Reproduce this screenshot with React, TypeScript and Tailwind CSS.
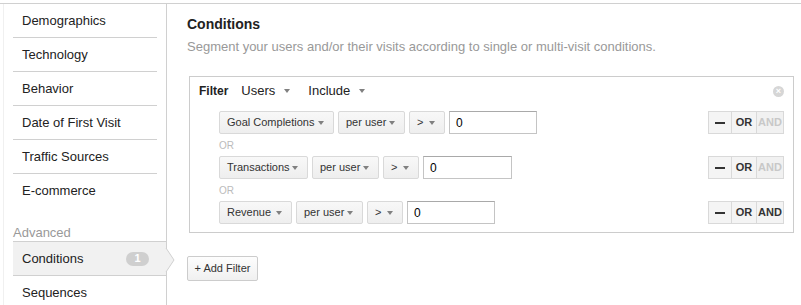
import React from 'react'

const NAV = ['Demographics', 'Technology', 'Behavior', 'Date of First Visit', 'Traffic Sources', 'E-commerce']

type Cond = { metric: string; mw: string; iw: string; andOn: boolean }

const CONDS: Cond[] = [
  { metric: 'Goal Completions', mw: 'w-[115px]', iw: 'w-[88px]', andOn: false },
  { metric: 'Transactions', mw: 'w-[89px]', iw: 'w-[89px]', andOn: false },
  { metric: 'Revenue', mw: 'w-[73px]', iw: 'w-[88px]', andOn: true },
]

function Caret() {
  return <span className="inline-block w-0 h-0 border-l-[3px] border-r-[3px] border-t-[4px] border-l-transparent border-r-transparent border-t-[#808080]" />
}

function Select({ label, w }: { label: string; w: string }) {
  return (
    <div className={`${w} h-[23px] flex items-center justify-between pl-[7px] pr-[9px] border border-[#d9d9d9] rounded-[2px] bg-gradient-to-b from-[#f8f8f8] to-[#eeeeee] text-[11px] text-[#333]`}>
      <span>{label}</span>
      <Caret />
    </div>
  )
}

function ConditionRow({ c }: { c: Cond }) {
  return (
    <div className="flex items-center justify-between h-[23px] pl-[29px] pr-[9px]">
      <div className="flex items-center gap-[4px]">
        <Select label={c.metric} w={c.mw} />
        <Select label="per user" w="w-[67px]" />
        <Select label=">" w="w-[36px]" />
        <div className={`${c.iw} h-[23px] flex items-center pl-[6px] border border-[#c4c4c4] border-t-[#a9a9a9] bg-white text-[12px] text-black`}>0</div>
      </div>
      <div className="flex h-[23px] text-[11px] font-bold">
        <div className="w-[24px] flex items-center justify-center border border-[#d9d9d9] bg-[#f4f4f4]">
          <span className="w-[10px] h-[2px] bg-[#333]" />
        </div>
        <div className="w-[25px] flex items-center justify-center border border-l-0 border-[#d9d9d9] bg-[#f4f4f4] text-[#333]">OR</div>
        <div className={`w-[27px] flex items-center justify-center border border-l-0 border-[#d9d9d9] ${c.andOn ? 'bg-[#f4f4f4] text-[#333]' : 'bg-[#f1f1f1] text-[#c8c8c8]'}`}>AND</div>
      </div>
    </div>
  )
}

export default function App() {
  return (
    <div className="w-[801px] h-[305px] overflow-hidden bg-white font-['Liberation_Sans',Arial,sans-serif] pt-[3px]">
      <div className="flex h-full border-t border-[#d0d0d0]">
        {/* Sidebar */}
        <div className="relative ml-[3px] w-[164px] flex-shrink-0 border-l border-r border-l-[#f0f0f0] border-r-[#d0d0d0] pl-[9px] text-[13px] text-[#222]">
          {NAV.map((n, i) => (
            <div key={n} className={`w-[144px] h-[34px] flex items-center pl-[9px] ${i < NAV.length - 1 ? 'border-b border-[#d0d0d0]' : ''}`}>
              {n}
            </div>
          ))}
          <div className="h-[33px] pt-[17px] leading-[15px] text-[#999]">Advanced</div>
          <div className="relative h-[35px] flex items-center justify-between pl-[9px] pr-[17px] bg-[#f1f1f1] border-t border-b border-[#d0d0d0]">
            <span>Conditions</span>
            <span className="w-[23px] h-[14px] rounded-full bg-[#cfcfcf] text-white text-[11px] font-bold flex items-center justify-center">1</span>
          </div>
          <svg className="absolute left-[161px] top-[244px]" width="12" height="24" viewBox="0 0 12 24">
            <path d="M0 0 L1 0 L9 12 L1 24 L0 24 Z" fill="#f1f1f1" />
            <path d="M1 0 L9 12 L1 24" fill="none" stroke="#d0d0d0" strokeWidth="1" />
          </svg>
          <div className="w-[144px] h-[33px] flex items-center pl-[9px]">Sequences</div>
        </div>

        {/* Main */}
        <div className="flex-1 pl-[20px] pt-[12px]">
          <div className="text-[14px] leading-[17px] font-bold text-[#222]">Conditions</div>
          <div className="mt-[5px] text-[13px] leading-[17px] text-[#999]">
            Segment your users and/or their visits according to single or multi-visit conditions.
          </div>

          <div className="ml-[2px] mt-[21px] w-[605px] border border-[#cccccc] pb-[8px]">
            <div className="h-[28px] flex items-center justify-between pl-[9px] pr-[9px]">
              <div className="flex items-center text-[13px] text-[#222]">
                <span className="text-[12px] font-bold">Filter</span>
                <span className="ml-[13px]">Users</span>
                <span className="ml-[9px] flex"><Caret /></span>
                <span className="ml-[18px]">Include</span>
                <span className="ml-[9px] flex"><Caret /></span>
              </div>
              <span className="w-[11px] h-[11px] rounded-full bg-[#d6d6d6] flex items-center justify-center text-white text-[9px] leading-none font-bold">×</span>
            </div>
            <div className="mt-[6px]">
              {CONDS.map((c, i) => (
                <React.Fragment key={c.metric}>
                  {i > 0 && (
                    <div className="h-[22px] flex items-center pl-[29px] text-[10px] text-[#bbb]">OR</div>
                  )}
                  <ConditionRow c={c} />
                </React.Fragment>
              ))}
            </div>
          </div>

          <button className="mt-[23px] h-[25px] w-[71px] border border-[#cccccc] rounded-[2px] bg-gradient-to-b from-[#fdfdfd] to-[#f0f0f0] text-[11px] text-[#333]">
            + Add Filter
          </button>
        </div>
      </div>
    </div>
  )
}
